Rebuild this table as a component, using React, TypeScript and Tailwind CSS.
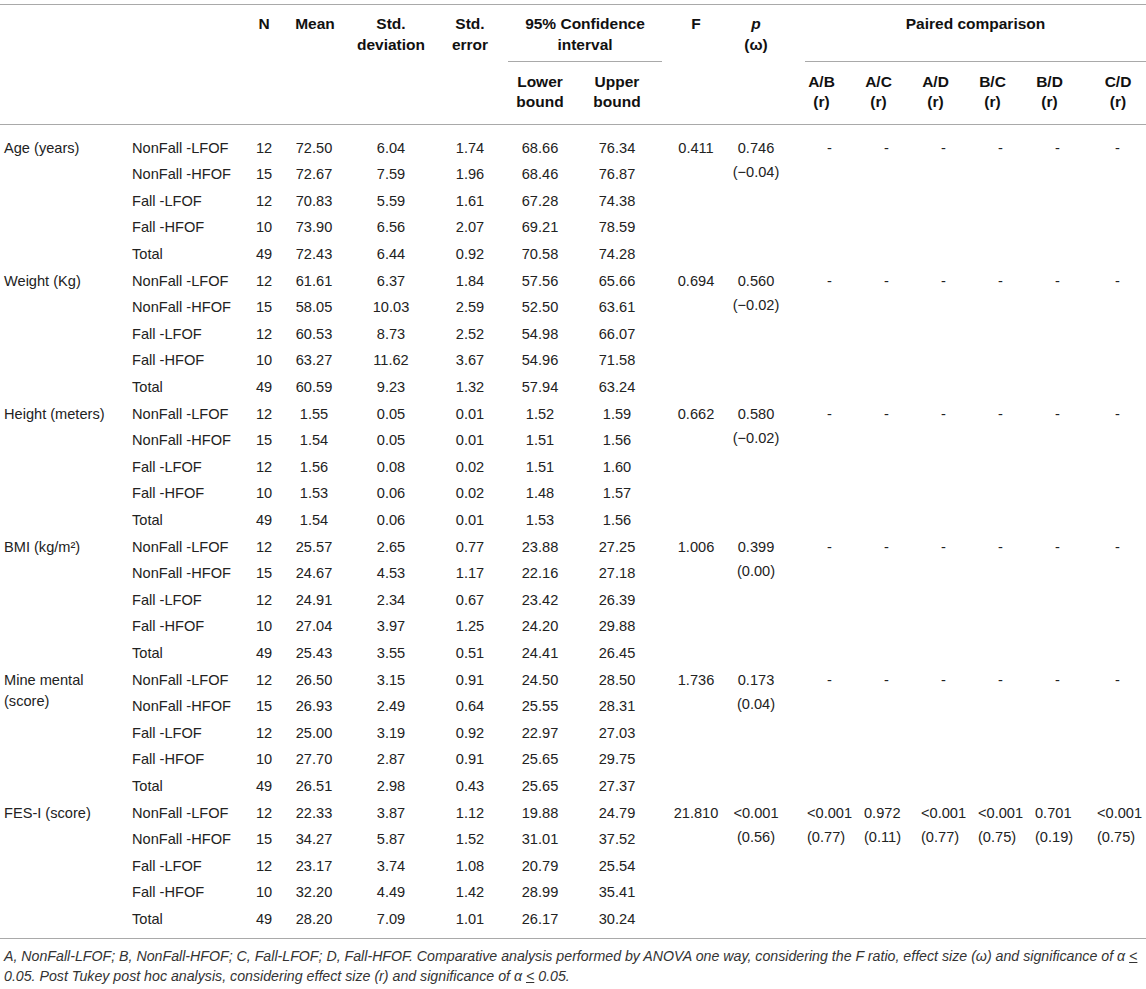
import React from "react";

const COLS =
  "grid grid-cols-[128px_117px_38px_67px_82px_76px_64px_90px_68px_75px_57px_57px_57px_57px_62px_51px]";

type Block = {
  label: React.ReactNode;
  multiLabel?: boolean;
  F: string;
  p: [string, string];
  paired: [string, string][] | null;
  rows: string[][];
};

const groups = ["NonFall -LFOF", "NonFall -HFOF", "Fall -LFOF", "Fall -HFOF", "Total"];

const blocks: Block[] = [
  {
    label: "Age (years)",
    F: "0.411",
    p: ["0.746", "(\u22120.04)"],
    paired: null,
    rows: [
      ["12", "72.50", "6.04", "1.74", "68.66", "76.34"],
      ["15", "72.67", "7.59", "1.96", "68.46", "76.87"],
      ["12", "70.83", "5.59", "1.61", "67.28", "74.38"],
      ["10", "73.90", "6.56", "2.07", "69.21", "78.59"],
      ["49", "72.43", "6.44", "0.92", "70.58", "74.28"],
    ],
  },
  {
    label: "Weight (Kg)",
    F: "0.694",
    p: ["0.560", "(\u22120.02)"],
    paired: null,
    rows: [
      ["12", "61.61", "6.37", "1.84", "57.56", "65.66"],
      ["15", "58.05", "10.03", "2.59", "52.50", "63.61"],
      ["12", "60.53", "8.73", "2.52", "54.98", "66.07"],
      ["10", "63.27", "11.62", "3.67", "54.96", "71.58"],
      ["49", "60.59", "9.23", "1.32", "57.94", "63.24"],
    ],
  },
  {
    label: "Height (meters)",
    F: "0.662",
    p: ["0.580", "(\u22120.02)"],
    paired: null,
    rows: [
      ["12", "1.55", "0.05", "0.01", "1.52", "1.59"],
      ["15", "1.54", "0.05", "0.01", "1.51", "1.56"],
      ["12", "1.56", "0.08", "0.02", "1.51", "1.60"],
      ["10", "1.53", "0.06", "0.02", "1.48", "1.57"],
      ["49", "1.54", "0.06", "0.01", "1.53", "1.56"],
    ],
  },
  {
    label: "BMI (kg/m\u00b2)",
    F: "1.006",
    p: ["0.399", "(0.00)"],
    paired: null,
    rows: [
      ["12", "25.57", "2.65", "0.77", "23.88", "27.25"],
      ["15", "24.67", "4.53", "1.17", "22.16", "27.18"],
      ["12", "24.91", "2.34", "0.67", "23.42", "26.39"],
      ["10", "27.04", "3.97", "1.25", "24.20", "29.88"],
      ["49", "25.43", "3.55", "0.51", "24.41", "26.45"],
    ],
  },
  {
    label: (
      <>
        Mine mental
        <br />
        (score)
      </>
    ),
    multiLabel: true,
    F: "1.736",
    p: ["0.173", "(0.04)"],
    paired: null,
    rows: [
      ["12", "26.50", "3.15", "0.91", "24.50", "28.50"],
      ["15", "26.93", "2.49", "0.64", "25.55", "28.31"],
      ["12", "25.00", "3.19", "0.92", "22.97", "27.03"],
      ["10", "27.70", "2.87", "0.91", "25.65", "29.75"],
      ["49", "26.51", "2.98", "0.43", "25.65", "27.37"],
    ],
  },
  {
    label: "FES-I (score)",
    F: "21.810",
    p: ["<0.001", "(0.56)"],
    paired: [
      ["<0.001", "(0.77)"],
      ["0.972", "(0.11)"],
      ["<0.001", "(0.77)"],
      ["<0.001", "(0.75)"],
      ["0.701", "(0.19)"],
      ["<0.001", "(0.75)"],
    ],
    rows: [
      ["12", "22.33", "3.87", "1.12", "19.88", "24.79"],
      ["15", "34.27", "5.87", "1.52", "31.01", "37.52"],
      ["12", "23.17", "3.74", "1.08", "20.79", "25.54"],
      ["10", "32.20", "4.49", "1.42", "28.99", "35.41"],
      ["49", "28.20", "7.09", "1.01", "26.17", "30.24"],
    ],
  },
];

const pairedHeaders = [
  { h: "A/B", cls: "col-start-11 pl-[2px] pr-[26px]" },
  { h: "A/C", cls: "col-start-12 pl-[2px] pr-[26px]" },
  { h: "A/D", cls: "col-start-13 pl-[2px] pr-[26px]" },
  { h: "B/C", cls: "col-start-14 pl-[2px] pr-[26px]" },
  { h: "B/D", cls: "col-start-15 pl-[2px] pr-[31px]" },
  { h: "C/D", cls: "col-start-16 pl-[7px] pr-[12px]" },
];

function DataRow({ block, i }: { block: Block; i: number }) {
  const r = block.rows[i];
  const first = i === 0;
  return (
    <div className={`${COLS} h-[26.6px] leading-[26.6px]`}>
      {first && block.multiLabel ? (
        <div className="pl-[4px] whitespace-nowrap leading-[21px] pt-[3px]">{block.label}</div>
      ) : (
        <div className="pl-[4px] whitespace-nowrap">{first ? block.label : ""}</div>
      )}
      <div className="pl-[4px] whitespace-nowrap">{groups[i]}</div>
      <div className="text-center">{r[0]}</div>
      <div className="text-center pr-[5px]">{r[1]}</div>
      <div className="text-center">{r[2]}</div>
      <div className="text-center">{r[3]}</div>
      <div className="text-center">{r[4]}</div>
      <div className="text-center">{r[5]}</div>
      <div className="text-center">{first ? block.F : ""}</div>
      {first ? (
        <div className="text-center pr-[23px] leading-[24px] pt-[1px] whitespace-nowrap">
          {block.p[0]}
          <br />
          {block.p[1]}
        </div>
      ) : (
        <div />
      )}
      {[0, 1, 2, 3, 4, 5].map((k) =>
        first ? (
          block.paired ? (
            <div key={k} className="pl-[2px] leading-[24px] pt-[1px] whitespace-nowrap">
              {block.paired[k][0]}
              <br />
              {block.paired[k][1]}
            </div>
          ) : (
            <div key={k} className={k === 5 ? "pl-[20px]" : "pl-[22px]"}>
              -
            </div>
          )
        ) : (
          <div key={k} />
        )
      )}
    </div>
  );
}

export default function App() {
  return (
    <div className="w-[1146px] bg-white pt-[4px] font-['Liberation_Sans',Arial,sans-serif] text-[#222]">
      <div className="h-px bg-[#a9a9a9]" />
      {/* Header */}
      <div className={`${COLS} grid-rows-[57px_62px] text-[15.5px] font-bold text-[#111]`}>
        <div className="col-start-3 row-start-1 row-span-2 text-center pt-[8px] leading-[21px]">N</div>
        <div className="col-start-4 row-start-1 row-span-2 text-center pt-[8px] leading-[21px] pr-[3px]">Mean</div>
        <div className="col-start-5 row-start-1 row-span-2 text-center pt-[8px] leading-[21px]">
          Std.
          <br />
          deviation
        </div>
        <div className="col-start-6 row-start-1 row-span-2 text-center pt-[8px] leading-[21px]">
          Std.
          <br />
          error
        </div>
        <div className="col-start-7 col-span-2 row-start-1 text-center pt-[8px] leading-[21px] border-b border-[#a9a9a9]">
          95% Confidence
          <br />
          interval
        </div>
        <div className="col-start-9 row-start-1 row-span-2 text-center pt-[8px] leading-[21px]">F</div>
        <div className="col-start-10 row-start-1 row-span-2 text-center pt-[8px] leading-[21px] pr-[23px]">
          <span className="italic">p</span>
          <br />
          (ω)
        </div>
        <div className="col-start-11 col-span-6 row-start-1 text-center pt-[8px] leading-[21px] border-b border-[#a9a9a9]">
          Paired comparison
        </div>
        <div className="col-start-7 row-start-2 text-center pt-[10px] leading-[20px]">
          Lower
          <br />
          bound
        </div>
        <div className="col-start-8 row-start-2 text-center pt-[10px] leading-[20px]">
          Upper
          <br />
          bound
        </div>
        {pairedHeaders.map(({ h, cls }) => (
          <div key={h} className={`row-start-2 pt-[10px] leading-[20px] text-center ${cls}`}>
            {h}
            <br />
            (r)
          </div>
        ))}
      </div>
      <div className="h-px bg-[#a9a9a9]" />
      {/* Body */}
      <div className="pt-[9.7px] text-[14.6px]">
        {blocks.map((b, bi) => (
          <div key={bi}>
            {[0, 1, 2, 3, 4].map((i) => (
              <DataRow key={i} block={b} i={i} />
            ))}
          </div>
        ))}
      </div>
      <div className="mt-[5px] h-px bg-[#a9a9a9]" />
      <div className="mt-[7px] pl-[4px] text-[14.2px] leading-[20px] italic text-[#333]">
        <div className="whitespace-nowrap">
          A, NonFall-LFOF; B, NonFall-HFOF; C, Fall-LFOF; D, Fall-HFOF. Comparative analysis performed by ANOVA one
          way, considering the F ratio, effect size (ω) and significance of α <span className="underline">&lt;</span>
        </div>
        <div className="whitespace-nowrap">
          0.05. Post Tukey post hoc analysis, considering effect size (r) and significance of α{" "}
          <span className="underline">&lt;</span> 0.05.
        </div>
      </div>
      <div className="h-[14px]" />
    </div>
  );
}
